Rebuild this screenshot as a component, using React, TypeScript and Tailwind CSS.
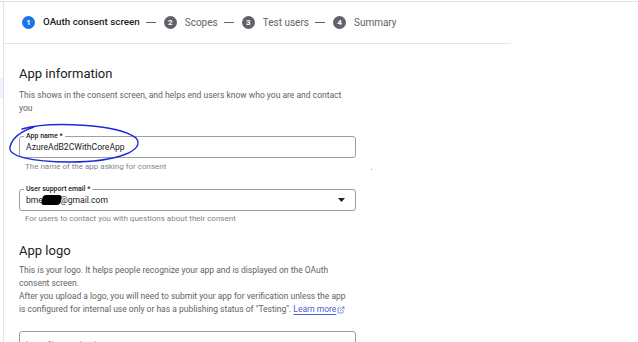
import React from 'react';
import { ExternalLink } from 'lucide-react';

const steps = [
  { n: 1, label: 'OAuth consent screen', active: true },
  { n: 2, label: 'Scopes', active: false },
  { n: 3, label: 'Test users', active: false },
  { n: 4, label: 'Summary', active: false },
];

const Stepper: React.FC = () => (
  <div className="flex items-center h-[42px] w-[507px] border-b border-[#e3e3e3] pl-[18px]">
    {steps.map((s, i) => (
      <div key={s.n} className="flex items-center">
        <span
          className={`flex items-center justify-center w-[13px] h-[13px] rounded-full text-white text-[8px] font-bold ${
            s.active ? 'bg-[#1a73e8]' : 'bg-[#5f6368]'
          }`}
        >
          {s.n}
        </span>
        <span
          className={`ml-[8px] ${
            s.active ? 'text-[9.8px] font-medium text-[#202124]' : 'text-[10px] text-[#5f6368]'
          }`}
        >
          {s.label}
        </span>
        {i < steps.length - 1 && (
          <span className="ml-[6px] mr-[8px] w-[10px] h-px bg-[#5f6368]" />
        )}
      </div>
    ))}
  </div>
);

interface FieldProps {
  label: string;
  children: React.ReactNode;
  dropdown?: boolean;
}

const Field: React.FC<FieldProps> = ({ label, children, dropdown }) => (
  <div className="relative w-[337px] h-[22px] border border-[#9aa0a6] rounded-[3px] flex items-center pl-[6px] pr-[10px]">
    <span className="absolute -top-[6px] left-[4px] bg-white px-[2px] text-[7px] leading-[10px] font-medium text-[#202124]">
      {label}
    </span>
    <div className="flex-1 text-[8.6px] text-[#202124] flex items-center">{children}</div>
    {dropdown && (
      <svg width="7" height="4" viewBox="0 0 7 4">
        <polygon points="0,0 7,0 3.5,4" fill="#202124" />
      </svg>
    )}
  </div>
);

const App: React.FC = () => {
  return (
    <div className="relative w-[638px] h-[342px] overflow-hidden bg-white font-['Roboto',sans-serif] text-[#202124]">
      <div className="mt-[1px] border-t border-[#e3e3e3] flex h-full">
        <div className="w-[3px] flex flex-col">
          <div className="h-[76px]" />
          <div className="h-[20px] bg-[#eef3fd]" />
        </div>
        <div className="flex-1 border-l border-[#e3e3e3]">
          <Stepper />
          <div className="pl-[15px]">
            <h2 className="mt-[22px] text-[13px] leading-[16px] text-[#202124]">App information</h2>
            <p className="mt-[7px] w-[332px] text-[8.5px] leading-[13px] text-[#5f6368]">
              This shows in the consent screen, and helps end users know who you are and contact you
            </p>

            <div className="mt-[21px]">
              <Field label="App name *">AzureAdB2CWithCoreApp</Field>
            </div>
            <p className="mt-[4px] pl-[6px] text-[8px] leading-[10px] text-[#80868b]">
              The name of the app asking for consent
            </p>

            <div className="mt-[17px]">
              <Field label="User support email *" dropdown>
                <span>bme</span>
                <span className="inline-block w-[19px] h-[10px] bg-black rounded-[3px] -ml-[1px] -mr-[1px] -skew-x-12" />
                <span>@gmail.com</span>
              </Field>
            </div>
            <p className="mt-[3px] pl-[6px] text-[8px] leading-[10px] text-[#80868b]">
              For users to contact you with questions about their consent
            </p>

            <h2 className="mt-[19px] text-[13px] leading-[16px] text-[#202124]">App logo</h2>
            <div className="mt-[5px] w-[332px] text-[8.5px] leading-[13px] text-[#5f6368]">
              <p>
                This is your logo. It helps people recognize your app and is displayed on the OAuth consent screen.
              </p>
              <p>
                After you upload a logo, you will need to submit your app for verification unless the app is configured
                for internal use only or has a publishing status of "Testing".{' '}
                <span className="text-[#4a5fd0] underline underline-offset-2 inline-flex items-center gap-[1px]">
                  Learn more
                  <ExternalLink className="w-[8px] h-[8px]" strokeWidth={2} />
                </span>
              </p>
            </div>

            <div className="mt-[15px] w-[337px] h-[30px] border border-[#9aa0a6] rounded-[3px] flex items-start justify-between pt-[7px] pl-[6px] pr-[8px]">
              <span className="text-[8.5px] text-[#80868b]">Logo file to upload</span>
              <span className="text-[8px] font-medium tracking-wide text-[#1a73e8]">BROWSE</span>
            </div>
          </div>
        </div>
      </div>

      <span className="absolute left-[371px] top-[169px] w-[1px] h-[1px] bg-[#9aa0a6]" />

      <svg className="absolute left-0 top-0 pointer-events-none" width="638" height="342" viewBox="0 0 638 342">
        <path
          d="M22 129 C 50 121, 118 124, 136 138 C 146 150, 118 162, 70 162 C 30 162, 8 156, 10 147 C 12 138, 22 131, 34 127"
          fill="none"
          stroke="#1b2bd8"
          strokeWidth="1.4"
          strokeLinecap="round"
        />
      </svg>
    </div>
  );
};

export default App;
